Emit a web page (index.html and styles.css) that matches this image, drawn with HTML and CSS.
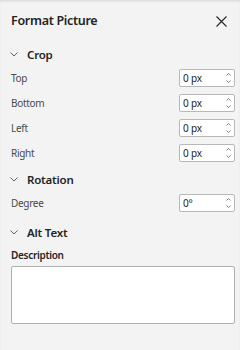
FILE: index.html
```html
<!DOCTYPE html>
<html lang="en">
<head>
  <meta charset="UTF-8" />
  <meta name="viewport" content="width=device-width, initial-scale=1.0" />
  <title>Format Picture</title>
  <link rel="stylesheet" href="styles.css">
</head>
<body>
  <div class="panel">
    <div class="header">
      <span class="title">Format Picture</span>
      <button class="close" aria-label="Close">
        <svg width="11" height="11" viewBox="0 0 11 11"><path d="M0.5 0.5L10.5 10.5M10.5 0.5L0.5 10.5" stroke="#242424" stroke-width="1.1" fill="none"/></svg>
      </button>
    </div>

    <div class="section">
      <div class="section-head">
        <svg class="chevron" width="8" height="5" viewBox="0 0 8 5"><path d="M0.5 0.5L4 4L7.5 0.5" stroke="#616161" stroke-width="1" fill="none"/></svg>
        <span>Crop</span>
      </div>
      <div class="row"><span class="label">Top</span><div class="spin"><span>0 px</span><div class="arrows"><svg width="5" height="3" viewBox="0 0 5 3"><path d="M0.5 2.5L2.5 0.5L4.5 2.5" stroke="#616161" fill="none" stroke-width="0.8"/></svg><svg width="5" height="3" viewBox="0 0 5 3"><path d="M0.5 0.5L2.5 2.5L4.5 0.5" stroke="#616161" fill="none" stroke-width="0.8"/></svg></div></div></div>
      <div class="row"><span class="label">Bottom</span><div class="spin"><span>0 px</span><div class="arrows"><svg width="5" height="3" viewBox="0 0 5 3"><path d="M0.5 2.5L2.5 0.5L4.5 2.5" stroke="#616161" fill="none" stroke-width="0.8"/></svg><svg width="5" height="3" viewBox="0 0 5 3"><path d="M0.5 0.5L2.5 2.5L4.5 0.5" stroke="#616161" fill="none" stroke-width="0.8"/></svg></div></div></div>
      <div class="row"><span class="label">Left</span><div class="spin"><span>0 px</span><div class="arrows"><svg width="5" height="3" viewBox="0 0 5 3"><path d="M0.5 2.5L2.5 0.5L4.5 2.5" stroke="#616161" fill="none" stroke-width="0.8"/></svg><svg width="5" height="3" viewBox="0 0 5 3"><path d="M0.5 0.5L2.5 2.5L4.5 0.5" stroke="#616161" fill="none" stroke-width="0.8"/></svg></div></div></div>
      <div class="row"><span class="label">Right</span><div class="spin"><span>0 px</span><div class="arrows"><svg width="5" height="3" viewBox="0 0 5 3"><path d="M0.5 2.5L2.5 0.5L4.5 2.5" stroke="#616161" fill="none" stroke-width="0.8"/></svg><svg width="5" height="3" viewBox="0 0 5 3"><path d="M0.5 0.5L2.5 2.5L4.5 0.5" stroke="#616161" fill="none" stroke-width="0.8"/></svg></div></div></div>
    </div>

    <div class="section rotation">
      <div class="section-head">
        <svg class="chevron" width="8" height="5" viewBox="0 0 8 5"><path d="M0.5 0.5L4 4L7.5 0.5" stroke="#616161" stroke-width="1" fill="none"/></svg>
        <span>Rotation</span>
      </div>
      <div class="row"><span class="label">Degree</span><div class="spin"><span>0°</span><div class="arrows"><svg width="5" height="3" viewBox="0 0 5 3"><path d="M0.5 2.5L2.5 0.5L4.5 2.5" stroke="#616161" fill="none" stroke-width="0.8"/></svg><svg width="5" height="3" viewBox="0 0 5 3"><path d="M0.5 0.5L2.5 2.5L4.5 0.5" stroke="#616161" fill="none" stroke-width="0.8"/></svg></div></div></div>
    </div>

    <div class="section alt">
      <div class="section-head">
        <svg class="chevron" width="8" height="5" viewBox="0 0 8 5"><path d="M0.5 0.5L4 4L7.5 0.5" stroke="#616161" stroke-width="1" fill="none"/></svg>
        <span>Alt Text</span>
      </div>
      <div class="desc-label">Description</div>
      <textarea class="desc"></textarea>
    </div>
  </div>
</body>
</html>
```

FILE: styles.css
```css
body {
  margin: 0;
  background: #f3f3f3;
  font-family: "Noto Sans", sans-serif;
  color: #242424;
}
.panel {
  height: 350px;
  padding: 0 5px 0 11px;
  box-sizing: border-box;
  box-shadow: inset 0 2px 3px -1px rgba(0,0,0,0.12);
}
.header {
  height: 43px;
  display: flex;
  align-items: center;
  justify-content: space-between;
}
.title {
  font-size: 12.5px;
  font-weight: 600;
  letter-spacing: -0.3px;
  margin-top: -2px;
}
.close {
  border: none;
  background: none;
  padding: 0;
  width: 11px;
  height: 11px;
  margin-right: 8px;
  margin-top: -1px;
  display: flex;
}
.section-head {
  height: 22px;
  display: flex;
  align-items: center;
  font-size: 11.5px;
  font-weight: 600;
  letter-spacing: -0.2px;
}
.chevron {
  margin: 0 9px 0 -1px;
}
.row {
  height: 25px;
  display: flex;
  align-items: center;
  justify-content: space-between;
}
.label {
  font-size: 10px;
  letter-spacing: -0.3px;
  color: #4a4a4a;
}
.spin {
  width: 56px;
  height: 18px;
  box-sizing: border-box;
  background: #fff;
  border: 1px solid #b8b8b8;
  border-radius: 2px;
  display: flex;
  align-items: center;
  justify-content: space-between;
  padding: 0 3px 0 3px;
  font-size: 10px;
  letter-spacing: -0.2px;
  color: #242424;
}
.arrows {
  display: flex;
  flex-direction: column;
  gap: 4px;
}
.rotation {
  margin-top: 3px;
}
.alt {
  margin-top: 6px;
}
.desc-label {
  margin-top: 2px;
  height: 20px;
  line-height: 20px;
  font-size: 10px;
  font-weight: 600;
  letter-spacing: -0.3px;
}
.desc {
  display: block;
  margin-top: 1px;
  width: 224px;
  height: 58px;
  box-sizing: border-box;
  border: 1px solid #b0b0b0;
  border-radius: 2px;
  background: #fff;
  resize: none;
}
```
